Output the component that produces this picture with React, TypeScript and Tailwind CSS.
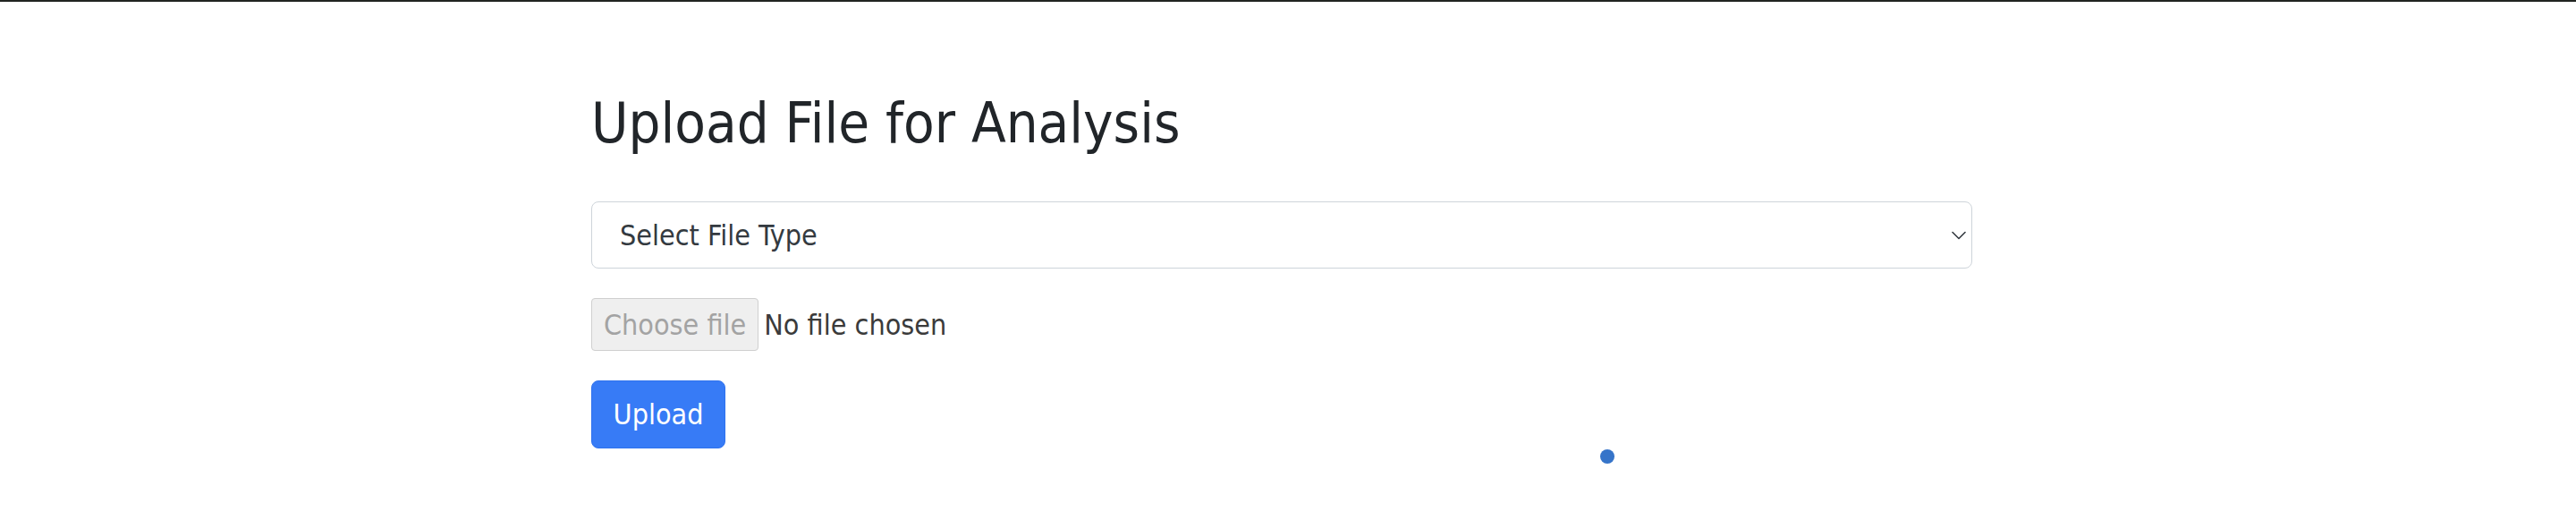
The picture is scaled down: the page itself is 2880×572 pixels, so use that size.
import React from 'react';

const font = { fontFamily: '"DejaVu Sans Condensed", "DejaVu Sans", sans-serif' };

const App: React.FC = () => {
    return (
        <div className="min-h-[572px] w-full bg-white" style={font}>
            <div className="h-[2px] w-full bg-[#212421]" />
            <main className="ml-[661px] flex w-[1544px] flex-col">
                <h1 className="mt-[98px] text-[63px] leading-[76px] font-normal text-[#212529]">Upload File for Analysis</h1>

                {/* file type dropdown */}
                <div className="mt-[49px] flex h-[75px] items-center justify-between rounded-[8px] border border-[#ced4da] pl-[31px] pr-[6px]">
                    <span className="text-[32px] leading-[40px] text-[#343a40]">Select File Type</span>
                    <svg width="16" height="10" viewBox="0 0 16 10" fill="none">
                        <path d="M1 1.5 L8 8.5 L15 1.5" stroke="#343a40" strokeWidth="1.6" strokeLinecap="round" strokeLinejoin="round" />
                    </svg>
                </div>

                <div className="mt-[33px] flex h-[59px] items-center gap-[6px]">
                    <button className="h-[59px] rounded-[4px] border border-[#cfcfcf] bg-[#efefef] px-[13px] text-[32px] leading-[40px] text-[#a3a3a3]">Choose file</button>
                    <span className="text-[32px] leading-[40px] text-[#3b3b3b]">No file chosen</span>
                </div>

                <div className="mt-[33px] flex">
                    <button className="flex h-[76px] w-[150px] items-center justify-center rounded-[8px] border border-[#2f72ee] bg-[#377bf6] text-[32px] leading-[40px] text-white">Upload</button>
                </div>

                <div className="mt-[1px] flex">
                    <div className="ml-[1128px] h-[16px] w-[16px] rounded-full bg-[#3674c9]" />
                </div>
            </main>
        </div>
    );
};

export default App;
